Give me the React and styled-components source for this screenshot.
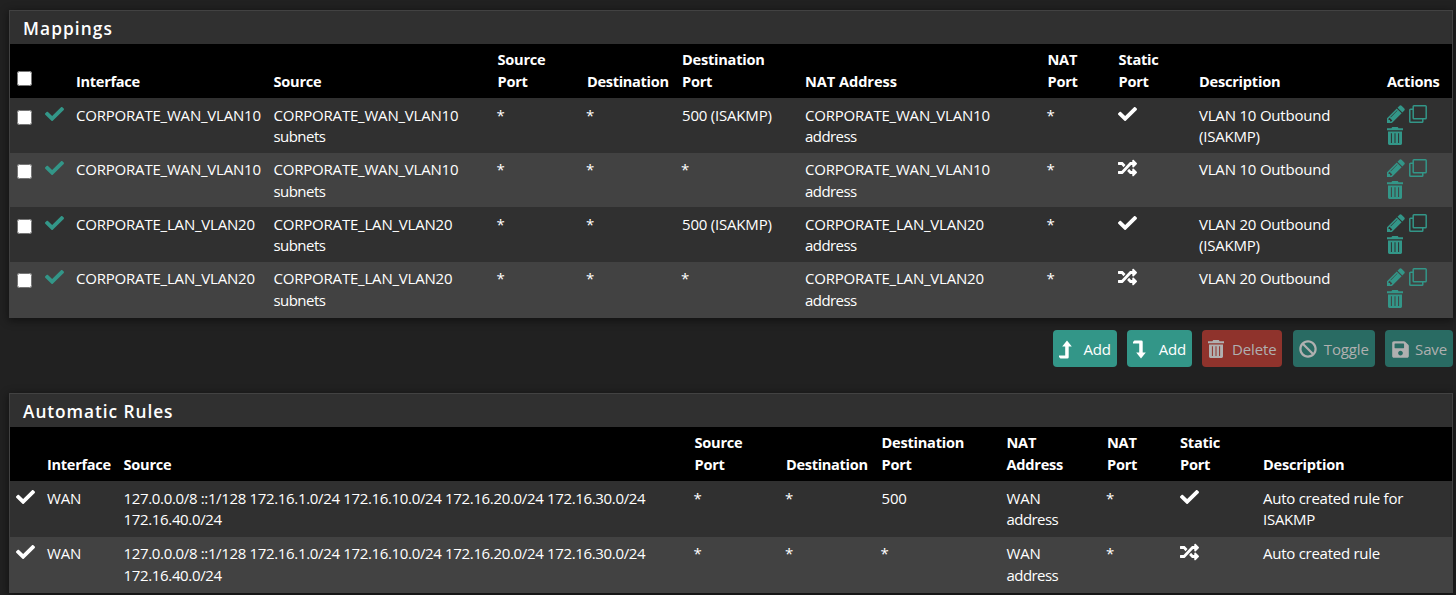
import React from 'react';
import styled, { createGlobalStyle, css } from 'styled-components';
import { FaCheck, FaRandom, FaBan, FaSave } from 'react-icons/fa';

const GlobalStyle = createGlobalStyle`
  * { box-sizing: border-box; }
  html, body { margin: 0; background: #212121; }
  body {
    height: 595px;
    overflow: hidden;
    color: #fff;
    font-family: "Segoe UI", "Open Sans", "Noto Sans", sans-serif;
    font-size: 15px;
    line-height: 21.6px;
  }
`;

const Page = styled.main`
  padding: 10px 3px 0 9px;
`;

const Panel = styled.section`
  border: 1px solid #424242;
  background: #303030;
  box-shadow: 0 2px 8px 1px rgba(0, 0, 0, 0.45);
`;

const PanelTitle = styled.h2`
  margin: 0;
  height: 33px;
  padding: 1px 0 0 13px;
  font-size: 17.3px;
  font-weight: 600;
  line-height: 33px;
  letter-spacing: ${(p) => p.$spacing || '0.95px'};
`;

const Table = styled.table`
  width: 100%;
  table-layout: fixed;
  border-collapse: collapse;
`;

const HeadRow = styled.tr`
  height: 54px;
  background: #000;
`;

const Row = styled.tr`
  height: ${(p) => p.$height}px;
  background: ${(p) => (p.$alt ? '#424242' : '#303030')};
`;

const cell = css`
  padding: 0 0 0 6px;
  text-align: left;
`;

const HeadCell = styled.th`
  ${cell}
  padding-bottom: 6px;
  vertical-align: bottom;
  font-size: 14.6px;
  line-height: 22px;
  font-weight: 700;
  white-space: pre-line;
  letter-spacing: ${(p) => p.$spacing || '-0.24px'};
`;

const Cell = styled.td`
  ${cell}
  padding-top: 6px;
  vertical-align: top;
  white-space: pre;
  letter-spacing: ${(p) => p.$spacing || '-0.2px'};
  ${Row}:nth-child(odd) & { padding-top: ${(p) => (p.$icon ? 6 : 6.6)}px; }
  ${Row}:nth-child(even) & { padding-top: ${(p) => (p.$icon ? 5 : 6)}px; }
`;

const Tight = styled.span`
  letter-spacing: -0.55px;
`;

const Star = styled.span`
  margin-left: -1px;
`;

const Checkbox = styled.input.attrs({ type: 'checkbox' })`
  display: block;
  width: 15px;
  height: 15px;
  margin: ${(p) => (p.$head ? '0 0 6px 1px' : '6px 0 0 1px')};
`;

const Icon = styled.span`
  display: block;
  height: 21px;
  color: ${(p) => (p.$teal ? '#339688' : '#fff')};
  svg { display: block; width: 19px; height: 20px; margin-left: ${(p) => (p.$teal ? '-1px' : '-0.5px')}; }
`;

const Actions = styled.div`
  display: flex;
  flex-wrap: wrap;
  width: 46px;
  column-gap: 4px;
  row-gap: 3.5px;
  padding-top: 1px;
  color: #339688;
`;

const ButtonBar = styled.div`
  display: flex;
  justify-content: flex-end;
  gap: 10.3px;
  height: 75px;
  padding-top: 12px;
`;

const Button = styled.button`
  display: flex;
  align-items: center;
  justify-content: space-between;
  width: ${(p) => p.$width}px;
  height: 37px;
  padding: 1px 6px 0;
  border: 0;
  border-radius: 4px;
  background: ${(p) => p.$bg};
  color: ${(p) => (p.$muted ? '#b0b0b0' : '#fff')};
  font: 15px/36px "Segoe UI", "Open Sans", sans-serif;
  letter-spacing: -0.15px;
  > svg { display: block; }
`;

const PencilIcon = () => (
  <svg width="18" height="18" viewBox="0 128 1536 1536" fill="currentColor">
    <path d="M363 1536l91-91-235-235-91 91v107h128v128h107zM886 608q0-22-22-22-10 0-17 7l-542 542q-7 7-7 17 0 22 22 22 10 0 17-7l542-542q7-7 7-17zM832 416l416 416-832 832h-416v-416zM1515 512q0 53-37 90l-166 166-416-416 166-165q36-38 90-38 53 0 91 38l235 234q37 39 37 91z" />
  </svg>
);

const CloneIcon = () => (
  <svg width="18" height="18" viewBox="0 0 18 18" fill="none" stroke="currentColor" strokeWidth="1.5">
    <rect x="4.2" y="0.8" width="13" height="13" rx="0.8" />
    <path d="M4.2 4.2H1.6Q0.8 4.2 0.8 5V16.4Q0.8 17.2 1.6 17.2H13Q13.8 17.2 13.8 16.4V13.8" />
  </svg>
);

const TrashIcon = () => (
  <svg width="16" height="18" viewBox="0 0 16 18" fill="currentColor" fillRule="evenodd">
    <path d="M5.2 0h5.6l.8 1.2H16v2H0v-2h4.4zM1 4.4h14V16.6q0 1.4-1.4 1.4H2.4Q1 18 1 16.6zM3.9 6.2v9.8h1V6.2zM7.5 6.2v9.8h1V6.2zM11.1 6.2v9.8h1V6.2z" />
  </svg>
);

const TurnUpIcon = () => (
  <svg width="13" height="19" viewBox="0 0 13 19" fill="currentColor">
    <path d="M8 0.4L12.8 6.6H9.7V17.2Q9.7 18.6 8.3 18.6H1.4L0 17V15.6H6.2V6.6H3.2Z" />
  </svg>
);

const TurnDownIcon = () => (
  <svg width="13" height="19" viewBox="0 0 13 19" fill="currentColor">
    <path d="M8 18.6L12.8 12.4H9.7V1.8Q9.7 0.4 8.3 0.4H1.4L0 2V3.4H6.2V12.4H3.2Z" />
  </svg>
);

const mapCols = [30, 30, 197.5, 224, 89.5, 95, 123, 242.5, 71, 80.5, 188, 71];
const autoCols = [31, 76.5, 571, 91.5, 95.5, 125, 100.5, 73, 83, 195];

function Cols({ widths }) {
  return <colgroup>{widths.map((w, i) => <col key={i} style={{ width: w }} />)}</colgroup>;
}

const mappings = [
  { name: 'CORPORATE_WAN_VLAN10', port: '500 (ISAKMP)', fixed: true, desc: 'VLAN 10 Outbound\n(ISAKMP)', h: 55 },
  { name: 'CORPORATE_WAN_VLAN10', desc: 'VLAN 10 Outbound', h: 54 },
  { name: 'CORPORATE_LAN_VLAN20', port: '500 (ISAKMP)', fixed: true, desc: 'VLAN 20 Outbound\n(ISAKMP)', h: 55 },
  { name: 'CORPORATE_LAN_VLAN20', desc: 'VLAN 20 Outbound', h: 55 },
];

const sources = '127.0.0.0/8 ::1/128 172.16.1.0/24 172.16.10.0/24 172.16.20.0/24 172.16.30.0/24\n172.16.40.0/24';
const autoRules = [
  { port: '500', fixed: true, desc: 'Auto created rule for\nISAKMP' },
  { desc: 'Auto created rule' },
];

const mapHeads = ['Interface', 'Source', 'Source\nPort', 'Destination', 'Destination\nPort', 'NAT Address', 'NAT\nPort', 'Static\nPort', 'Description', 'Actions'];
const autoHeads = ['', 'Interface', 'Source', 'Source\nPort', 'Destination', 'Destination\nPort', 'NAT\nAddress', 'NAT\nPort', 'Static\nPort', 'Description'];
const headSpacing = { 'NAT Address': '-0.05px', Destination: '-0.33px', Interface: '-0.3px' };

export default function App() {
  return (
    <Page>
      <GlobalStyle />
      <Panel>
        <PanelTitle $spacing="1.1px">Mappings</PanelTitle>
        <Table>
          <Cols widths={mapCols} />
          <thead>
            <HeadRow>
              <HeadCell><Checkbox $head /></HeadCell>
              <HeadCell />
              {mapHeads.map((h) => <HeadCell key={h} $spacing={headSpacing[h]}>{h}</HeadCell>)}
            </HeadRow>
          </thead>
          <tbody>
            {mappings.map((m, i) => (
              <Row key={i} $height={m.h} $alt={i % 2 === 1}>
                <Cell $icon><Checkbox /></Cell>
                <Cell $icon><Icon $teal><FaCheck /></Icon></Cell>
                <Cell>{m.name}</Cell>
                <Cell>{`${m.name}\n`}<Tight>subnets</Tight></Cell>
                <Cell><Star>*</Star></Cell>
                <Cell><Star>*</Star></Cell>
                <Cell>{m.port || <Star>*</Star>}</Cell>
                <Cell>{`${m.name}\n`}<Tight>address</Tight></Cell>
                <Cell><Star>*</Star></Cell>
                <Cell $icon><Icon>{m.fixed ? <FaCheck /> : <FaRandom />}</Icon></Cell>
                <Cell>{m.desc}</Cell>
                <Cell $icon>
                  <Actions><PencilIcon /><CloneIcon /><TrashIcon /></Actions>
                </Cell>
              </Row>
            ))}
          </tbody>
        </Table>
      </Panel>
      <ButtonBar>
        <Button $width={64} $bg="#339688"><TurnUpIcon />Add</Button>
        <Button $width={65} $bg="#339688"><TurnDownIcon />Add</Button>
        <Button $width={80} $bg="#8f332c" $muted><TrashIcon />Delete</Button>
        <Button $width={82} $bg="#296b63" $muted><FaBan size={18} />Toggle</Button>
        <Button $width={68} $bg="#296b63" $muted><FaSave size={19} />Save</Button>
      </ButtonBar>
      <Panel>
        <PanelTitle>Automatic Rules</PanelTitle>
        <Table>
          <Cols widths={autoCols} />
          <thead>
            <HeadRow>{autoHeads.map((h) => <HeadCell key={h} $spacing={headSpacing[h]}>{h}</HeadCell>)}</HeadRow>
          </thead>
          <tbody>
            {autoRules.map((r, i) => (
              <Row key={i} $height={i ? 55 : 56} $alt={i === 1}>
                <Cell $icon><Icon><FaCheck /></Icon></Cell>
                <Cell>WAN</Cell>
                <Cell $spacing="-0.34px">{sources}</Cell>
                <Cell><Star>*</Star></Cell>
                <Cell><Star>*</Star></Cell>
                <Cell>{r.port || <Star>*</Star>}</Cell>
                <Cell>{'WAN\n'}<Tight>address</Tight></Cell>
                <Cell><Star>*</Star></Cell>
                <Cell $icon><Icon>{r.fixed ? <FaCheck /> : <FaRandom />}</Icon></Cell>
                <Cell $spacing="-0.26px">{r.desc}</Cell>
              </Row>
            ))}
          </tbody>
        </Table>
      </Panel>
    </Page>
  );
}
